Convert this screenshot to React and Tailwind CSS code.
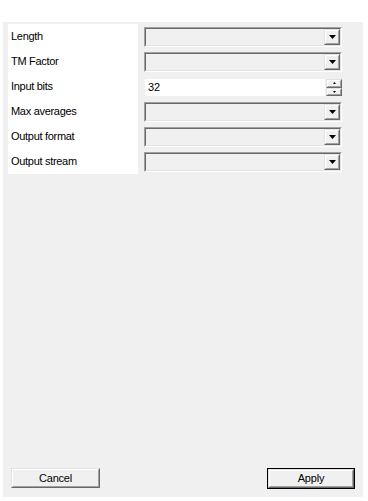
import React from "react";

const font = { fontFamily: '"Liberation Sans", Arial, sans-serif' };

function Arrow() {
  return (
    <svg width="7" height="4" viewBox="0 0 7 4">
      <path d="M0 0H7L3.5 4Z" fill="#000" />
    </svg>
  );
}

function Raised({ className = "", children }) {
  return (
    <div className={`border border-t-[#e3e3e3] border-l-[#e3e3e3] border-r-[#696969] border-b-[#696969] ${className}`}>
      <div className="w-full h-full border border-t-white border-l-white border-r-[#a0a0a0] border-b-[#a0a0a0] bg-[#f0f0f0] flex items-center justify-center">
        {children}
      </div>
    </div>
  );
}

function Combo() {
  return (
    <div className="w-[198px] h-[20px] border border-t-[#a0a0a0] border-l-[#a0a0a0] border-r-white border-b-white">
      <div className="w-full h-full border border-t-[#696969] border-l-[#696969] border-r-[#e3e3e3] border-b-[#e3e3e3] bg-[#f0f0f0] flex justify-end">
        <Raised className="w-[16px] h-full">
          <Arrow />
        </Raised>
      </div>
    </div>
  );
}

function Spin() {
  return (
    <div className="w-[198px] h-[17px] flex">
      <div className="flex-1 bg-white flex items-center pl-[3px] text-[11px] text-black ml-[1px]">32</div>
      <div className="w-[16px] flex flex-col ml-[1px]">
        <Raised className="h-[9px]">
          <svg width="3" height="2" viewBox="0 0 3 2"><path d="M1.5 0L3 2H0Z" fill="#000" /></svg>
        </Raised>
        <Raised className="h-[8px]">
          <svg width="3" height="2" viewBox="0 0 3 2"><path d="M0 0H3L1.5 2Z" fill="#000" /></svg>
        </Raised>
      </div>
    </div>
  );
}

const rows = [
  ["Length", "combo"],
  ["TM Factor", "combo"],
  ["Input bits", "spin"],
  ["Max averages", "combo"],
  ["Output format", "combo"],
  ["Output stream", "combo"],
];

export default function App() {
  return (
    <div className="w-[368px] h-[501px] bg-white pt-[22px] pl-[3px] pr-[5px] pb-[4px]" style={font}>
      <div className="w-full h-full bg-[#f0f0f0] flex flex-col">
        <div className="flex pl-[5px] pt-[2px]">
          <div className="w-[130px] bg-white flex flex-col">
            {rows.map(([label]) => (
              <div key={label} className="h-[25px] flex items-center pl-[3px] text-[11px] tracking-[-0.3px] text-black">
                {label}
              </div>
            ))}
          </div>
          <div className="ml-[6px] flex flex-col">
            {rows.map(([label, type]) => (
              <div key={label} className="h-[25px] flex items-center pt-[1px]">
                {type === "combo" ? <Combo /> : <Spin />}
              </div>
            ))}
          </div>
        </div>
        <div className="flex-1" />
        <div className="flex justify-between px-[8px] pb-[8px]">
          <Raised className="w-[89px] h-[20px]">
            <span className="text-[11px] tracking-[-0.2px] text-black">Cancel</span>
          </Raised>
          <div className="w-[88px] h-[21px] border border-black">
            <Raised className="w-full h-full">
              <span className="text-[11px] tracking-[-0.2px] text-black">Apply</span>
            </Raised>
          </div>
        </div>
      </div>
    </div>
  );
}
